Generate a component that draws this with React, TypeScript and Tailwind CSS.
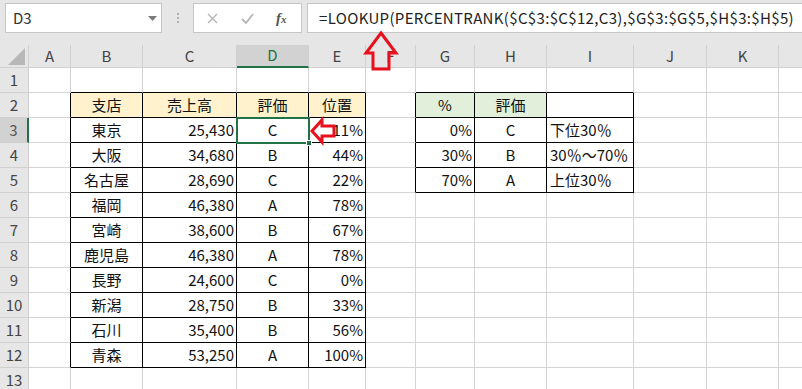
import React from "react";

type Align = "l" | "c" | "r";
type Cell = { t: string; a?: Align; bg?: string };

const cols: { k: string; w: number }[] = [
  { k: "A", w: 42 },
  { k: "B", w: 72 },
  { k: "C", w: 94 },
  { k: "D", w: 72 },
  { k: "E", w: 57 },
  { k: "F", w: 50 },
  { k: "G", w: 59 },
  { k: "H", w: 72 },
  { k: "I", w: 87 },
  { k: "J", w: 73 },
  { k: "K", w: 72 },
  { k: "", w: 60 },
];

const branches: [string, string, string, string][] = [
  ["東京", "25,430", "C", "11%"],
  ["大阪", "34,680", "B", "44%"],
  ["名古屋", "28,690", "C", "22%"],
  ["福岡", "46,380", "A", "78%"],
  ["宮崎", "38,600", "B", "67%"],
  ["鹿児島", "46,380", "A", "78%"],
  ["長野", "24,600", "C", "0%"],
  ["新潟", "28,750", "B", "33%"],
  ["石川", "35,400", "B", "56%"],
  ["青森", "53,250", "A", "100%"],
];

const lookup: [string, string, string][] = [
  ["0%", "C", "下位30％"],
  ["30%", "B", "30％～70％"],
  ["70%", "A", "上位30％"],
];

// sheet data keyed by row -> col index (0 = A)
function buildSheet(): Record<number, Record<number, Cell>> {
  const s: Record<number, Record<number, Cell>> = {};
  s[2] = {
    1: { t: "支店", a: "c", bg: "y" },
    2: { t: "売上高", a: "c", bg: "y" },
    3: { t: "評価", a: "c", bg: "y" },
    4: { t: "位置", a: "c", bg: "y" },
    6: { t: "%", a: "c", bg: "g" },
    7: { t: "評価", a: "c", bg: "g" },
    8: { t: "", a: "l" },
  };
  branches.forEach((b, i) => {
    const r = i + 3;
    s[r] = {
      1: { t: b[0], a: "c" },
      2: { t: b[1], a: "r" },
      3: { t: b[2], a: "c" },
      4: { t: b[3], a: "r" },
    };
  });
  lookup.forEach((l, i) => {
    const r = i + 3;
    s[r][6] = { t: l[0], a: "r" };
    s[r][7] = { t: l[1], a: "c" };
    s[r][8] = { t: l[2], a: "l" };
  });
  return s;
}

const sheet = buildSheet();

const inTable = (r: number, c: number) =>
  (r >= 2 && r <= 12 && c >= 1 && c <= 4) || (r >= 2 && r <= 5 && c >= 6 && c <= 8);

const rows = Array.from({ length: 13 }, (_, i) => i + 1);

const SheetCell: React.FC<{ r: number; c: number }> = ({ r, c }) => {
  const cell = sheet[r]?.[c];
  const rightBlack = inTable(r, c) || inTable(r, c + 1);
  const bottomBlack = inTable(r, c) || inTable(r + 1, c);
  const bg =
    cell?.bg === "y" ? "bg-[#fff2cc]" : cell?.bg === "g" ? "bg-[#e2efda]" : "bg-white";
  const align =
    cell?.a === "r" ? "justify-end pr-[2px]" : cell?.a === "l" ? "justify-start pl-[3px]" : "justify-center";
  return (
    <div
      className={`h-[25px] border-r border-b flex items-center overflow-hidden whitespace-nowrap text-[15px] text-[#111] ${bg} ${align} ${
        rightBlack ? "border-r-black" : "border-r-[#d4d4d4]"
      } ${bottomBlack ? "border-b-black" : "border-b-[#d4d4d4]"}`}
    >
      {cell?.t}
    </div>
  );
};

export default function App() {
  return (
    <div className="relative w-[802px] h-[389px] overflow-hidden bg-white font-['Noto_Sans_CJK_JP',sans-serif]">
      {/* formula bar */}
      <div className="h-[45px] bg-[#e6e6e6] flex items-start pt-[3px] pl-[5px]">
        <div className="w-[157px] h-[30px] bg-white border border-[#c6c6c6] flex items-center pl-[7px] relative">
          <span className="text-[15px] text-[#333]">D3</span>
          <svg className="absolute right-[4px] top-[12px]" width="9" height="5" viewBox="0 0 9 5">
            <path d="M0 0 H9 L4.5 5 Z" fill="#7a7a7a" />
          </svg>
        </div>
        <div className="w-[31px] h-[30px] flex flex-col items-center justify-center gap-[2px]">
          <span className="w-[2px] h-[2px] bg-[#b0b0b0]" />
          <span className="w-[2px] h-[2px] bg-[#b0b0b0]" />
          <span className="w-[2px] h-[2px] bg-[#b0b0b0]" />
        </div>
        <div className="w-[109px] h-[30px] bg-white border border-[#c6c6c6] flex items-center">
          <svg className="ml-[13px]" width="11" height="11" viewBox="0 0 11 11">
            <path d="M1 1 L10 10 M10 1 L1 10" stroke="#b4b4b4" strokeWidth="1.3" />
          </svg>
          <svg className="ml-[23px]" width="13" height="11" viewBox="0 0 13 11">
            <path d="M1 6 L5 10 L12 1" stroke="#b4b4b4" strokeWidth="1.8" fill="none" />
          </svg>
          <span className="ml-[22px] text-[15px] italic font-bold font-['Liberation_Serif',serif] text-[#555] leading-none">
            f<span className="text-[11px]">x</span>
          </span>
        </div>
        <div className="ml-[5px] flex-1 h-[30px] bg-white border border-[#c6c6c6] border-r-0 flex items-center pl-[11px]">
          <span className="text-[15px] text-[#222] whitespace-nowrap tracking-[0.34px]">
            =LOOKUP(PERCENTRANK($C$3:$C$12,C3),$G$3:$G$5,$H$3:$H$5)
          </span>
        </div>
      </div>

      {/* sheet */}
      <div className="relative grid grid-cols-[29px_42px_72px_94px_72px_57px_50px_59px_72px_87px_73px_72px_60px] auto-rows-[25px] [grid-template-rows:23px]">
        {/* corner */}
        <div className="h-[23px] bg-[#e6e6e6] border-r border-b border-[#d0d0d0] relative">
          <svg className="absolute left-[8px] top-[3px]" width="17" height="17" viewBox="0 0 17 17">
            <path d="M17 0 V17 H0 Z" fill="#b8b8b8" />
          </svg>
        </div>
        {cols.map((c, ci) => (
          <div
            key={ci}
            className={`h-[23px] border-r border-[#d0d0d0] flex items-center justify-center text-[15px] ${
              c.k === "D"
                ? "bg-[#d2d2d2] text-[#217346] border-b-2 border-b-[#217346]"
                : "bg-[#e6e6e6] text-[#444] border-b border-b-[#d0d0d0]"
            }`}
          >
            {c.k}
          </div>
        ))}
        {rows.map((r) => (
          <React.Fragment key={r}>
            <div
              className={`h-[25px] border-b border-[#d0d0d0] flex items-center justify-center text-[15px] ${
                r === 3
                  ? "bg-[#d2d2d2] text-[#555] border-r-2 border-r-[#217346]"
                  : "bg-[#e6e6e6] text-[#444] border-r border-r-[#d0d0d0]"
              }`}
            >
              {r}
            </div>
            {cols.map((c, ci) => (
              <SheetCell key={ci} r={r} c={ci} />
            ))}
          </React.Fragment>
        ))}

        {/* active cell D3 */}
        <div className="absolute left-[236px] top-[72px] w-[74px] h-[27px] border-2 border-[#217346] pointer-events-none" />
        <div className="absolute left-[306px] top-[95px] w-[6px] h-[6px] bg-[#217346] border border-white pointer-events-none" />
      </div>

      {/* red arrows */}
      <svg className="absolute left-[362px] top-[29px]" width="40" height="44" viewBox="362 29 40 44">
        <path
          d="M381 33 L396 53 L389 53 L389 69 L373 69 L373 53 L366 53 Z"
          fill="none"
          stroke="#e8101c"
          strokeWidth="3"
          strokeLinejoin="miter"
        />
      </svg>
      <svg className="absolute left-[308px] top-[116px]" width="30" height="30" viewBox="308 116 30 30">
        <path
          d="M312 131 L322 120 L322 126 L334 126 L334 136 L322 136 L322 142 Z"
          fill="none"
          stroke="#e8101c"
          strokeWidth="3"
          strokeLinejoin="miter"
        />
      </svg>
    </div>
  );
}
